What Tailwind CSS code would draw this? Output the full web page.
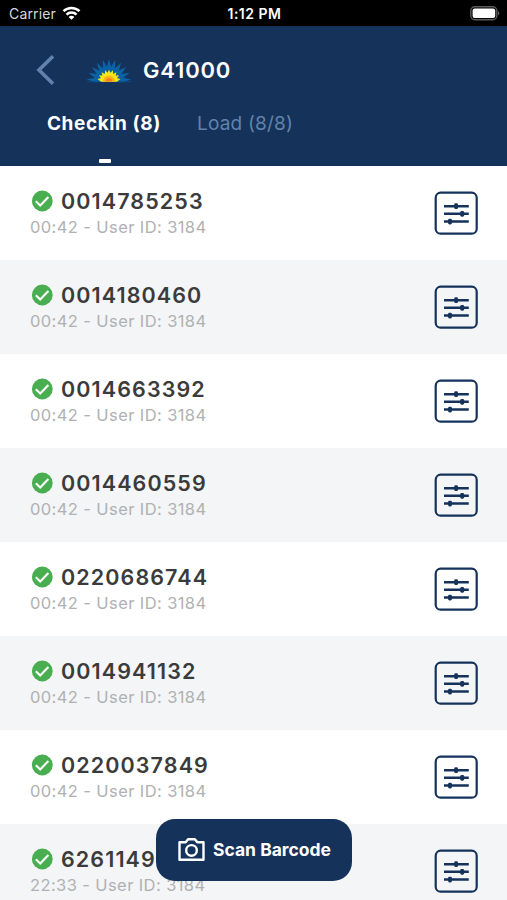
<!DOCTYPE html>
<html lang="en">
<head>
  <meta charset="UTF-8" />
  <meta name="viewport" content="width=device-width, initial-scale=1.0" />
  <title>G41000 - Checkin</title>
  <script src="https://cdn.jsdelivr.net/npm/@tailwindcss/browser@4"></script>
</head>
<body class="bg-white font-['Inter',sans-serif]">
  <div class="relative w-[507px] h-[900px] overflow-hidden">

    <!-- Status bar -->
    <div class="h-[26px] bg-black text-white grid grid-cols-3 items-center pl-[9px] pr-[7px] pt-[2px] text-[14px] leading-none">
      <div class="flex items-center gap-[6px]">
        <span class="text-[#d8d8d8] tracking-[0.15px]">Carrier</span>
        <svg class="w-[19px] h-[14px] -mt-[2px]" viewBox="0 0 18 14" fill="none" stroke="#fff" stroke-width="2.5">
          <path d="M1 5.2a11.4 11.4 0 0 1 16 0" />
          <path d="M4 8.6a7 7 0 0 1 10 0" />
          <path d="M9 13.8 6.1 11a4 4 0 0 1 5.8 0z" fill="#fff" stroke="none" />
        </svg>
      </div>
      <span class="text-center font-semibold text-[14px] tracking-[0.5px]">1:12 PM</span>
      <svg class="w-[30px] h-[15px] -mt-[2px] justify-self-end" viewBox="0 0 30 15">
        <rect x=".8" y=".8" width="26" height="13" rx="4" fill="#000" stroke="#5a5a5a" stroke-width="1.4" />
        <rect x="2.6" y="2.6" width="22.6" height="9.4" rx="2" fill="#fff" />
        <path d="M28 5v4.6c1.9-.8 1.9-3.8 0-4.6z" fill="#5a5a5a" />
      </svg>
    </div>

    <!-- Header -->
    <header class="h-[140px] bg-[#15325b] flex flex-col">
      <div class="flex items-center h-[88px] pl-[36px]">
        <svg class="w-[19px] h-[32px]" viewBox="0 0 19 32" fill="none" stroke="#6183ab" stroke-width="3.6">
          <path d="M17 2.3 3 16l14 13.7" />
        </svg>
        <svg class="w-[46px] h-[26px] ml-[31px]" viewBox="0 0 46 26">
          <defs>
            <path id="ray" d="M0 0-2.3-14 0-22.5 2.3-14z" />
            <path id="flame" d="M0 0-1.8-8 0-11.8 1.8-8z" />
          </defs>
          <g fill="#0b62a5" transform="translate(23 24.5)">
            <use href="#ray" transform="rotate(-84)" />
            <use href="#ray" transform="rotate(-67)" />
            <use href="#ray" transform="rotate(-50)" />
            <use href="#ray" transform="rotate(-33)" />
            <use href="#ray" transform="rotate(-16)" />
            <use href="#ray" />
            <use href="#ray" transform="rotate(16)" />
            <use href="#ray" transform="rotate(33)" />
            <use href="#ray" transform="rotate(50)" />
            <use href="#ray" transform="rotate(67)" />
            <use href="#ray" transform="rotate(84)" />
          </g>
          <path d="M1 24.7h44" stroke="#0b4f88" stroke-width=".8" />
          <g fill="#f6e51c" transform="translate(23 24.5)">
            <path d="M-8.5 0a8.5 8.5 0 0 1 17 0z" />
            <use href="#flame" transform="rotate(-78)" />
            <use href="#flame" transform="rotate(-58)" />
            <use href="#flame" transform="rotate(-39)" />
            <use href="#flame" transform="rotate(-19)" />
            <use href="#flame" />
            <use href="#flame" transform="rotate(19)" />
            <use href="#flame" transform="rotate(39)" />
            <use href="#flame" transform="rotate(58)" />
            <use href="#flame" transform="rotate(78)" />
          </g>
          <path d="M17 24.5a6 6 0 0 1 12 0z" fill="#fdb515" />
          <path d="M19.5 24.5a3.5 3.5 0 0 1 7 0z" fill="#f58220" />
        </svg>
        <h1 class="ml-[11px] text-white font-semibold text-[22px] leading-none tracking-[0.8px]">G41000</h1>
      </div>
      <nav class="flex flex-1 pl-[47px] gap-[36px] text-[19px] leading-[20px]">
        <div class="flex flex-col items-center justify-between w-[114px]">
          <span class="text-white font-bold whitespace-nowrap tracking-[0.6px]">Checkin (8)</span>
          <span class="w-[12px] h-[4px] mb-[3px] ml-[2px] bg-white rounded-[1px]"></span>
        </div>
        <span class="text-[#6183ab] whitespace-nowrap tracking-[0.2px]">Load (8/8)</span>
      </nav>
    </header>

    <!-- Items -->
    <ul id="items"></ul>

    <!-- Floating scan button -->
    <button class="absolute left-[156px] top-[819px] w-[196px] h-[62px] rounded-[19px] bg-[#15325b] text-white flex items-center pl-[22px] gap-[8px]">
      <svg class="w-[27px] h-[25px] -mt-[2px]" viewBox="0 0 27 25" fill="none" stroke="#fff" stroke-width="2.4">
        <path d="M1.5 5.3h6.2l2.4-3.1h6.8l2.4 3.1h6.2v17.4h-24z" stroke-linejoin="round" />
        <circle cx="13.5" cy="13.4" r="5.3" />
      </svg>
      <span class="font-bold text-[17.5px] leading-none whitespace-nowrap">Scan Barcode</span>
    </button>
  </div>

  <script>
    const items = [
      { code: "0014785253", time: "00:42", user: 3184 },
      { code: "0014180460", time: "00:42", user: 3184 },
      { code: "0014663392", time: "00:42", user: 3184 },
      { code: "0014460559", time: "00:42", user: 3184 },
      { code: "0220686744", time: "00:42", user: 3184 },
      { code: "0014941132", time: "00:42", user: 3184 },
      { code: "0220037849", time: "00:42", user: 3184 },
      { code: "6261149", time: "22:33", user: 3184 }
    ];

    document.getElementById("items").innerHTML = items.map((item) => `
      <li class="h-[94px] flex items-center justify-between pl-[30px] pr-[29px] bg-white even:bg-[#f3f5f7]">
        <div class="pt-[2px]">
          <div class="flex items-center gap-[8px] h-[26px] pl-px">
            <svg class="w-[22px] h-[22px]" viewBox="0 0 22 22">
              <circle cx="11.3" cy="11" r="10.4" fill="#48ae50" />
              <path d="m4.8 11.2 4.4 4.2 8.2-8.5" fill="none" stroke="#fff" stroke-width="2.1" />
            </svg>
            <span class="text-[#3b3b3b] font-semibold text-[21.5px] leading-none tracking-[1.1px] pt-[2px]">${item.code}</span>
          </div>
          <p class="text-[#b0b1b3] text-[16.5px] leading-[26px] tracking-[0.4px]">${item.time} - User ID: ${item.user}</p>
        </div>
        <svg class="w-[44px] h-[44px]" viewBox="0 0 44 44" fill="none" stroke="#15325b" stroke-width="2.2">
          <rect x="1.7" y="1.7" width="41" height="41" rx="5" />
          <path d="M10 15.2h24.8M10 22.8h24.8M10 30.6h24.8" stroke-width="2.5" />
          <g fill="#15325b" stroke="none">
            <rect x="20.2" y="12.3" width="3.8" height="5.8" rx="1.4" />
            <rect x="26.3" y="19.9" width="3.8" height="5.8" rx="1.4" />
            <rect x="14.1" y="27.7" width="3.8" height="5.8" rx="1.4" />
          </g>
        </svg>
      </li>
    `).join("");
  </script>
</body>
</html>
